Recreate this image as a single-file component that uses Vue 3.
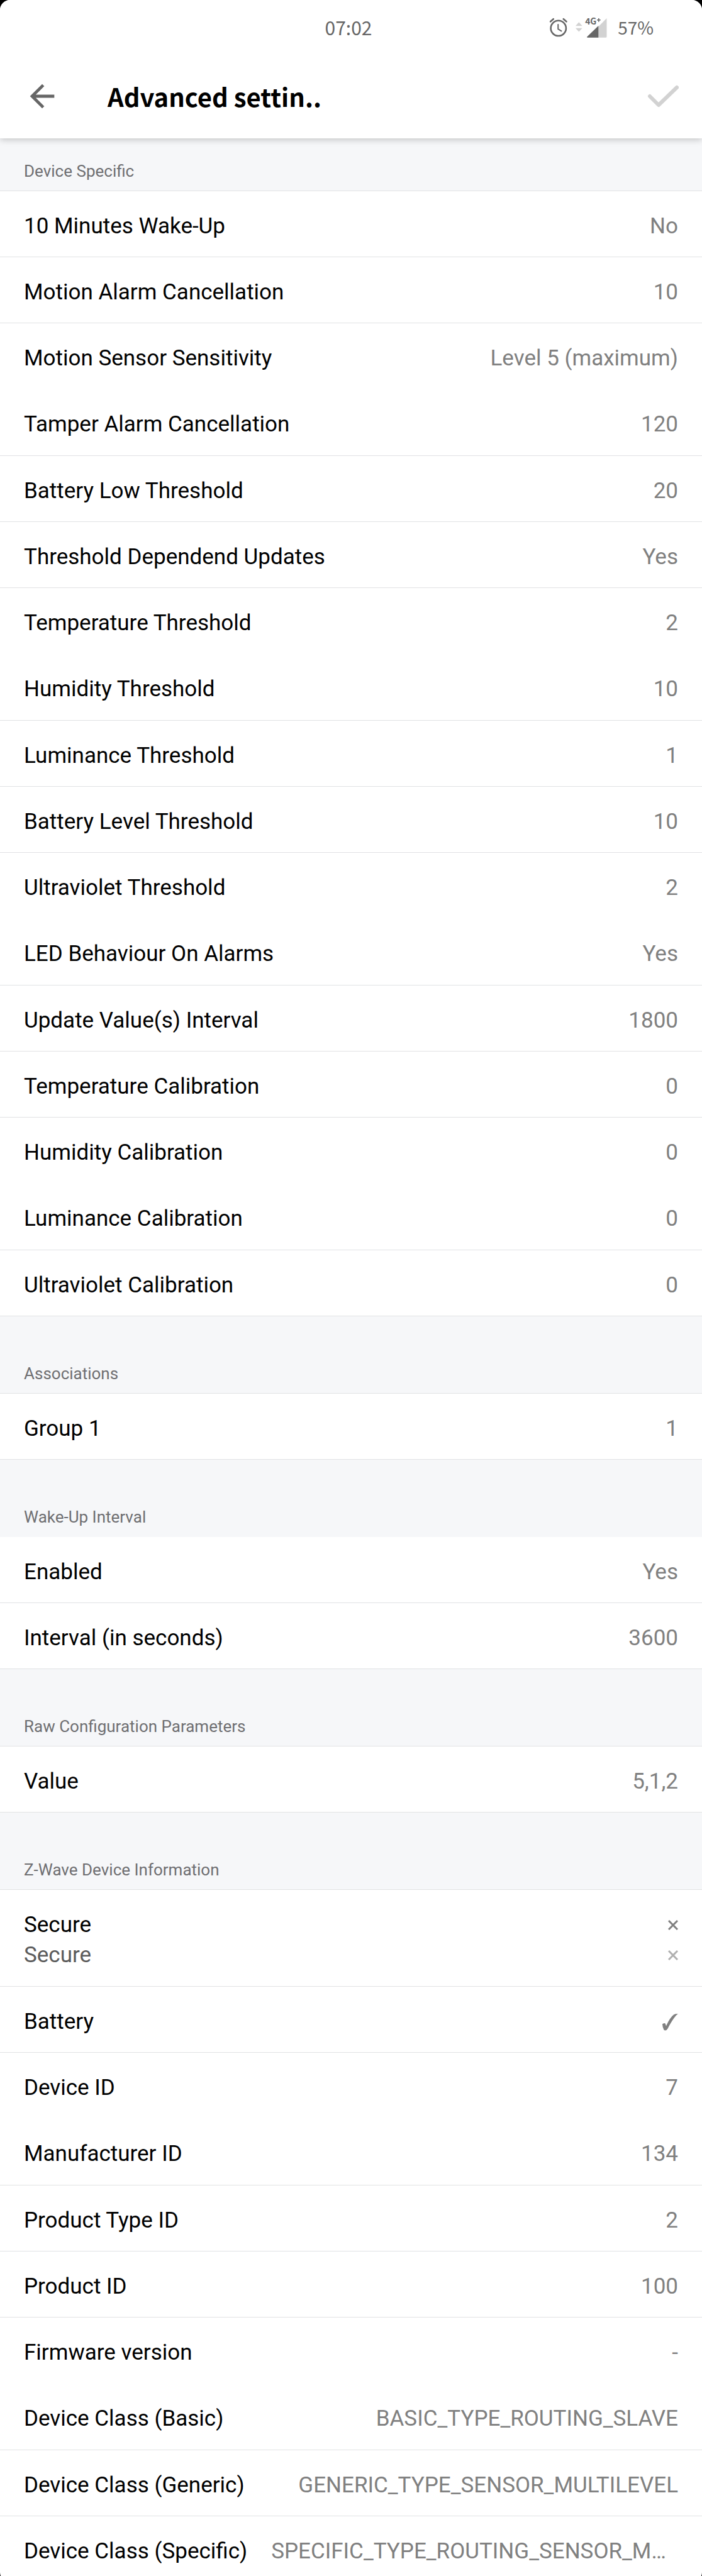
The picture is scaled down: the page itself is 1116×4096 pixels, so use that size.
<script setup>
const sections = [
  {
    title: 'Device Specific',
    rows: [
      { label: '10 Minutes Wake-Up', value: 'No' },
      { label: 'Motion Alarm Cancellation', value: '10' },
      { label: 'Motion Sensor Sensitivity', value: 'Level 5 (maximum)', plain: true },
      { label: 'Tamper Alarm Cancellation', value: '120' },
      { label: 'Battery Low Threshold', value: '20' },
      { label: 'Threshold Dependend Updates', value: 'Yes' },
      { label: 'Temperature Threshold', value: '2', plain: true },
      { label: 'Humidity Threshold', value: '10' },
      { label: 'Luminance Threshold', value: '1' },
      { label: 'Battery Level Threshold', value: '10' },
      { label: 'Ultraviolet Threshold', value: '2', plain: true },
      { label: 'LED Behaviour On Alarms', value: 'Yes' },
      { label: 'Update Value(s) Interval', value: '1800' },
      { label: 'Temperature Calibration', value: '0' },
      { label: 'Humidity Calibration', value: '0', plain: true },
      { label: 'Luminance Calibration', value: '0' },
      { label: 'Ultraviolet Calibration', value: '0' },
    ],
  },
  { title: 'Associations', rows: [{ label: 'Group 1', value: '1' }] },
  {
    title: 'Wake-Up Interval',
    plain: true,
    rows: [
      { label: 'Enabled', value: 'Yes' },
      { label: 'Interval (in seconds)', value: '3600' },
    ],
  },
  { title: 'Raw Configuration Parameters', rows: [{ label: 'Value', value: '5,1,2' }] },
  {
    title: 'Z-Wave Device Information',
    rows: [
      { label: 'Secure', sub: 'Secure', icon: 'cross' },
      { label: 'Battery', icon: 'tick' },
      { label: 'Device ID', value: '7', plain: true },
      { label: 'Manufacturer ID', value: '134' },
      { label: 'Product Type ID', value: '2' },
      { label: 'Product ID', value: '100' },
      { label: 'Firmware version', value: '-', plain: true },
      { label: 'Device Class (Basic)', value: 'BASIC_TYPE_ROUTING_SLAVE' },
      { label: 'Device Class (Generic)', value: 'GENERIC_TYPE_SENSOR_MULTILEVEL' },
      { label: 'Device Class (Specific)', value: 'SPECIFIC_TYPE_ROUTING_SENSOR_MULTILEVEL', plain: true },
    ],
  },
]
</script>

<template>
  <div class="screen">
    <header class="top">
      <div class="status">
        <span></span>
        <time class="clock">07:02</time>
        <div class="indicators">
          <svg class="status-icons" viewBox="0 0 360 135" aria-hidden="true">
            <g fill="none" stroke="#666" stroke-linecap="round" stroke-linejoin="round">
              <circle cx="61" cy="73" r="47" stroke-width="10" />
              <path d="M12 32 30 16M92 16l18 16" stroke-width="10" />
              <path d="M59 50v28l20 12" stroke-width="8" />
            </g>
            <path d="M166 59h42l-21-23zM166 72h42l-21 23z" fill="#d2d2d2" />
            <path d="M240 130 358 11v115q0 4-4 4z" fill="#d2d2d2" />
            <path d="M307 58v72h-68q-4-1-2-4z" fill="#666" />
            <text class="net" x="225" y="49">4G</text>
            <path d="M309 11v23M298 22h22" stroke="#666" stroke-width="6" />
          </svg>
          <span class="battery">57%</span>
        </div>
      </div>
      <div class="bar">
        <button class="back" type="button" aria-label="Back">
          <svg viewBox="0 0 24 24" width="58" height="58">
            <path d="M20 11H7.83l5.59-5.59L12 4l-8 8 8 8 1.41-1.41L7.83 13H20v-2z" fill="#666" />
          </svg>
        </button>
        <h1>Advanced settin..</h1>
        <button class="save" type="button" aria-label="Save">
          <svg viewBox="0 0 50 36" width="50" height="36">
            <path d="M4 18 18 32 47 4" fill="none" stroke="#d2d2d2" stroke-width="6" stroke-linecap="round" stroke-linejoin="round" />
          </svg>
        </button>
      </div>
    </header>

    <main>
      <section v-for="section in sections" :key="section.title">
        <h2 :class="{ plain: section.plain }">{{ section.title }}</h2>
        <ul>
          <li v-for="row in section.rows" :key="row.label" :class="{ plain: row.plain, double: row.sub }">
            <div class="labels">
              <span>{{ row.label }}</span>
              <span v-if="row.sub" class="sub">{{ row.sub }}</span>
            </div>
            <div v-if="row.icon === 'cross'" class="marks">
              <span v-for="n in 2" :key="n" class="mark">
                <svg viewBox="0 0 16 16" width="16" height="16" role="img" aria-label="No">
                  <path d="M1 1 15 15M15 1 1 15" :stroke="n === 1 ? '#808080' : '#b0b0b0'" stroke-width="3" />
                </svg>
              </span>
            </div>
            <div v-else-if="row.icon === 'tick'" class="marks">
              <span class="mark">
                <svg viewBox="0 0 71 76" width="25" height="27" role="img" aria-label="Yes">
                  <path d="M0 46Q6 42 12 42 15 48 17 55 33 18 51 4 57 0 71 0 53 12 24 67 19 75 14 75 9 75 7 73 0 58 0 46z" fill="#808080" />
                </svg>
              </span>
            </div>
            <span v-else class="value">{{ row.value }}</span>
          </li>
        </ul>
      </section>
    </main>
  </div>
</template>

<style>
body {
  margin: 0;
  background: #000;
}
</style>

<style scoped>
.screen {
  min-height: 100vh;
  overflow: hidden;
  border-radius: 16px;
  background: #fff;
  color: #000;
  font-family: Roboto, sans-serif;
}

.top {
  position: relative;
  height: 220px;
  background: #fff;
  box-shadow: 0 2px 10px rgba(0, 0, 0, 0.22);
}

.status {
  display: grid;
  grid-template-columns: 1fr auto 1fr;
  align-items: center;
  height: 86px;
  padding: 0 77px 0 69px;
  color: #666;
  font: 30px/40px "Noto Sans CJK SC", sans-serif;
}

.indicators {
  display: flex;
  align-items: center;
  justify-content: flex-end;
  gap: 17px;
}

.battery {
  font-size: 28px;
}

.status-icons {
  width: 93px;
  height: 35px;
  overflow: visible;
}

.net {
  fill: #666;
  font: bold 54px "Noto Sans CJK SC", sans-serif;
}

.bar {
  display: flex;
  align-items: center;
  height: 134px;
  padding: 0 37px 0 38px;
}

button {
  display: flex;
  padding: 0;
  border: 0;
  background: none;
}

h1 {
  margin: 0 auto 0 75px;
  white-space: nowrap;
  font: bold 40px/60px "Noto Sans CJK SC", sans-serif;
}

h2 {
  box-sizing: border-box;
  height: 123px;
  margin: 0;
  padding: 74px 38px 0;
  border-bottom: 1px solid #e1e2e4;
  background: #f6f7f9;
  color: #6f6f72;
  font-size: 26px;
  font-weight: 400;
  line-height: 34px;
}

section:first-child h2 {
  height: 84px;
  padding-top: 35px;
}

h2.plain {
  border-color: #f6f7f9;
}

ul {
  margin: 0;
  padding: 0;
  list-style: none;
}

li {
  display: flex;
  gap: 38px;
  justify-content: space-between;
  box-sizing: border-box;
  height: 105px;
  padding: 32px 38px 0;
  border-bottom: 1px solid #e1e2e4;
  font-size: 35px;
  line-height: 48px;
}

li:nth-child(4n) {
  height: 106px;
}

li.double {
  height: 154px;
}

li.plain {
  border-color: transparent;
}

.labels,
.marks {
  display: flex;
  flex: none;
  flex-direction: column;
}

.sub {
  color: #5c5c5c;
}

.mark {
  display: flex;
  align-items: center;
  justify-content: flex-end;
  height: 48px;
}

.value {
  overflow: hidden;
  color: #808080;
  text-overflow: ellipsis;
  white-space: nowrap;
}
</style>
